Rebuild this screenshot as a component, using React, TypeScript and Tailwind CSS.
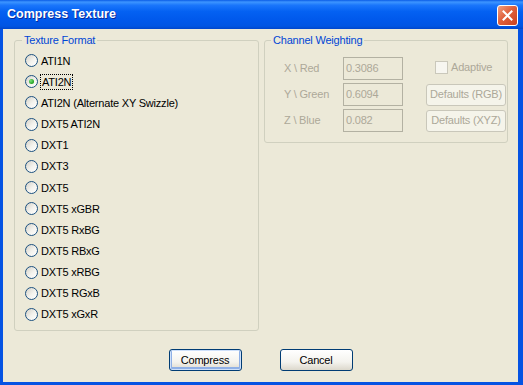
const formats = [
  'ATI1N',
  'ATI2N',
  'ATI2N (Alternate XY Swizzle)',
  'DXT5 ATI2N',
  'DXT1',
  'DXT3',
  'DXT5',
  'DXT5 xGBR',
  'DXT5 RxBG',
  'DXT5 RBxG',
  'DXT5 xRBG',
  'DXT5 RGxB',
  'DXT5 xGxR',
];

const weights = [
  { label: 'X \\ Red', value: '0.3086' },
  { label: 'Y \\ Green', value: '0.6094' },
  { label: 'Z \\ Blue', value: '0.082' },
];

function Radio({ checked }: { checked?: boolean }) {
  return (
    <span className="w-[13px] h-[13px] shrink-0 rounded-full border border-[#1C5180] bg-[linear-gradient(135deg,#D4D1C8_0%,#F4F3EE_55%,#FFFFFF_100%)] flex items-center justify-center">
      {checked && (
        <span className="w-[5px] h-[5px] rounded-full bg-[radial-gradient(circle_at_35%_35%,#7BE07B,#21A121_70%)]" />
      )}
    </span>
  );
}

function DisabledButton({ children }: { children: React.ReactNode }) {
  return (
    <div className="w-[80px] h-[22px] rounded-[3px] border border-[#C9C7BA] bg-[#F5F4EA] text-[#ACA899] flex items-center justify-center">
      {children}
    </div>
  );
}

export default function App() {
  return (
    <div className="w-[523px] h-[385px] flex flex-col bg-[#0553E3] font-['Liberation_Sans',Arial,sans-serif] text-[11px] text-black tracking-[-0.2px] select-none">
      {/* title bar */}
      <div className="h-[29px] shrink-0 flex items-center pl-[7px] pr-[5px] bg-[linear-gradient(180deg,#0A5CE6_0%,#3D95FF_7%,#1A76FB_18%,#0461F2_40%,#0058EB_70%,#0055E3_90%,#0046CC_100%)]">
        <span className="text-white font-bold text-[12.5px] tracking-normal [text-shadow:1px_1px_0_#0A2A9C]">
          Compress Texture
        </span>
        <div className="ml-auto mt-[1px] w-[21px] h-[21px] rounded-[3px] border border-white bg-[linear-gradient(135deg,#F0A080_0%,#E0603C_45%,#C9401F_100%)] flex items-center justify-center">
          <svg width="11" height="11" viewBox="0 0 11 11">
            <path d="M1.5 1.5 L9.5 9.5 M9.5 1.5 L1.5 9.5" stroke="white" strokeWidth="2" strokeLinecap="square" />
          </svg>
        </div>
      </div>

      {/* dialog body */}
      <div className="flex-1 ml-[3px] mr-[5px] mb-[3px] bg-[#ECE9D8] flex flex-col pt-[5px]">
        <div className="flex items-start">
          <fieldset className="ml-[11px] w-[245px] border border-[#D0D0BF] rounded-[3px] pt-[3px] pb-[5px]">
            <legend className="ml-[7px] px-[2px] leading-[13px] text-[#0046D5]">Texture Format</legend>
            <div className="flex flex-col">
              {formats.map((f, i) => (
                <div key={f} className="h-[21.17px] flex items-center pl-[10px] gap-[3px]">
                  <Radio checked={i === 1} />
                  <span
                    className={
                      i === 1
                        ? 'leading-[14px] px-[1px] -ml-[1px] border border-dotted border-black'
                        : 'leading-[14px]'
                    }
                  >
                    {f}
                  </span>
                </div>
              ))}
            </div>
          </fieldset>

          <fieldset className="ml-[5px] w-[244px] border border-[#D0D0BF] rounded-[3px] pt-[10px] pb-[10px]">
            <legend className="ml-[6px] px-[2px] leading-[13px] text-[#0046D5]">Channel Weighting</legend>
            <div className="flex flex-col gap-[3px]">
              {weights.map((w, i) => (
                <div key={w.label} className="h-[23px] flex items-center pl-[19px]">
                  <span className="w-[59px] text-[#ACA899]">{w.label}</span>
                  <div className="w-[60px] h-[23px] border border-[#B3B1A2] bg-[#ECE9D8] text-[#ACA899] flex items-center pl-[2px]">
                    {w.value}
                  </div>
                  {i === 0 && (
                    <div className="ml-[32px] flex items-center gap-[3px] -mt-[3px]">
                      <span className="w-[13px] h-[13px] border border-[#CAC8BB] bg-[#F7F6F0]" />
                      <span className="text-[#ACA899]">Adaptive</span>
                    </div>
                  )}
                  {i === 1 && (
                    <div className="ml-[23px]">
                      <DisabledButton>Defaults (RGB)</DisabledButton>
                    </div>
                  )}
                  {i === 2 && (
                    <div className="ml-[23px]">
                      <DisabledButton>Defaults (XYZ)</DisabledButton>
                    </div>
                  )}
                </div>
              ))}
            </div>
          </fieldset>
        </div>

        <div className="mt-[18px] flex justify-center gap-[38px]">
          <button className="w-[73px] h-[22px] rounded-[3px] border border-[#003C74] bg-[linear-gradient(180deg,#FFFFFF_0%,#F4F3EE_60%,#DCD8CC_100%)] shadow-[inset_0_0_0_1px_#CEE0FA,inset_0_-1px_0_2px_#8FB0E6]">
            Compress
          </button>
          <button className="w-[73px] h-[22px] rounded-[3px] border border-[#003C74] bg-[linear-gradient(180deg,#FFFFFF_0%,#F4F3EE_60%,#DCD8CC_100%)]">
            Cancel
          </button>
        </div>
      </div>
    </div>
  );
}
